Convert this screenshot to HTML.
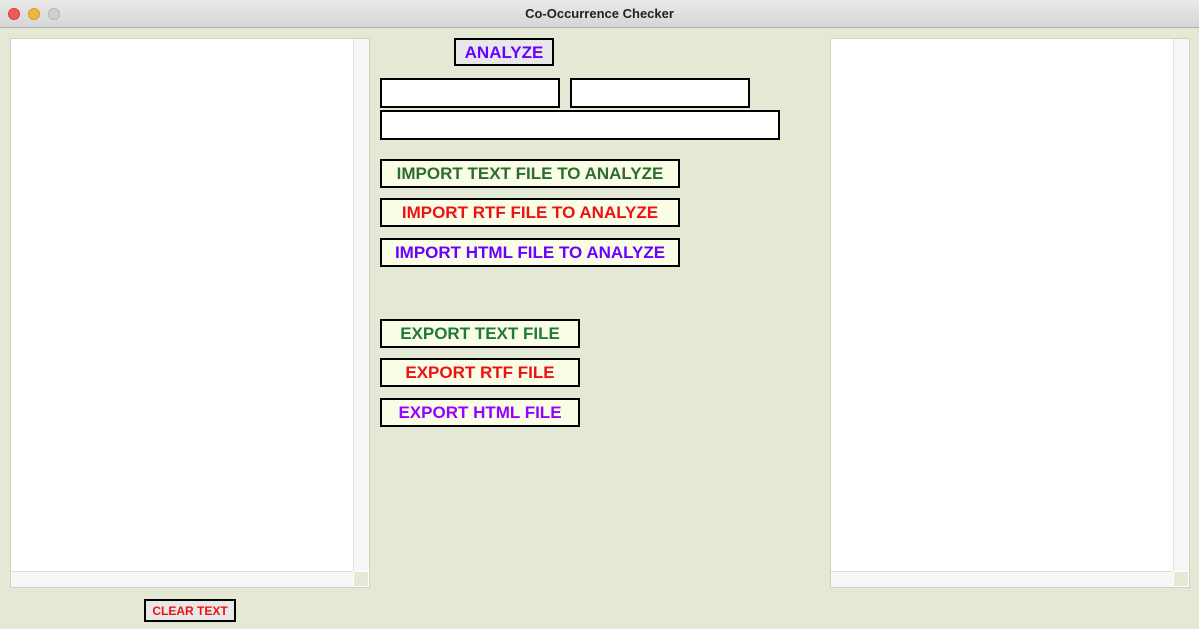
<!DOCTYPE html>
<html><head><style>
*{margin:0;padding:0;box-sizing:border-box}
body{width:1199px;height:629px;background:#e4e9d6;font-family:"Liberation Sans",sans-serif;position:relative;overflow:hidden}
.tb{position:absolute;left:0;top:0;width:1199px;height:28px;background:linear-gradient(#e9e9e9,#d6d6d6);border-bottom:1px solid #b0b0b0;text-align:center;font-size:13px;font-weight:bold;color:#222;line-height:27px}
.dot{position:absolute;top:8px;width:12px;height:12px;border-radius:50%}
.panel{position:absolute;top:38px;width:360px;height:550px;background:#fff;border:1px solid #cfd3c2}
.vs{position:absolute;right:0;top:0;width:16px;height:533px;background:#f7f7f7;border-left:1px solid #e2e2e2}
.hs{position:absolute;left:0;bottom:0;width:342px;height:16px;background:#f7f7f7;border-top:1px solid #ddd}
.cn{position:absolute;right:0;bottom:0;width:16px;height:16px;background:#e4e9d6;border:1px solid #fff}
.b{position:absolute;border:2px solid #000;font-weight:bold;text-align:center;font-size:17px;background:#fafde6;line-height:26px}
.e{position:absolute;border:2px solid #000;background:#fff}
</style></head><body>
<div class="tb">Co-Occurrence Checker</div>
<div class="dot" style="left:8px;background:#ec5b56;border:1px solid #d2443f"></div>
<div class="dot" style="left:28px;background:#eeb73a;border:1px solid #d29f2a"></div>
<div class="dot" style="left:48px;background:#d0d0d0;border:1px solid #b5b5b5"></div>
<div class="panel" style="left:10px"><div class="vs"></div><div class="hs"></div><div class="cn"></div></div>
<div class="panel" style="left:830px"><div class="vs"></div><div class="hs"></div><div class="cn"></div></div>
<div class="b" style="left:454px;top:38px;width:100px;height:28px;background:#e8e8e8;color:#6a00ff;line-height:25px">ANALYZE</div>
<div class="e" style="left:380px;top:78px;width:180px;height:30px"></div>
<div class="e" style="left:570px;top:78px;width:180px;height:30px"></div>
<div class="e" style="left:380px;top:110px;width:400px;height:30px"></div>
<div class="b" style="left:380px;top:159px;width:300px;height:29px;color:#2e6b2e">IMPORT TEXT FILE TO ANALYZE</div>
<div class="b" style="left:380px;top:198px;width:300px;height:29px;color:#ee1111">IMPORT RTF FILE TO ANALYZE</div>
<div class="b" style="left:380px;top:238px;width:300px;height:29px;color:#6a00ff">IMPORT HTML FILE TO ANALYZE</div>
<div class="b" style="left:380px;top:319px;width:200px;height:29px;color:#1f7a3a">EXPORT TEXT FILE</div>
<div class="b" style="left:380px;top:358px;width:200px;height:29px;color:#ee1111">EXPORT RTF FILE</div>
<div class="b" style="left:380px;top:398px;width:200px;height:29px;color:#9900ff">EXPORT HTML FILE</div>
<div class="b" style="left:144px;top:599px;width:92px;height:23px;font-size:12px;line-height:20px;background:#e8e8e8;color:#ee1111">CLEAR TEXT</div>
</body></html>
